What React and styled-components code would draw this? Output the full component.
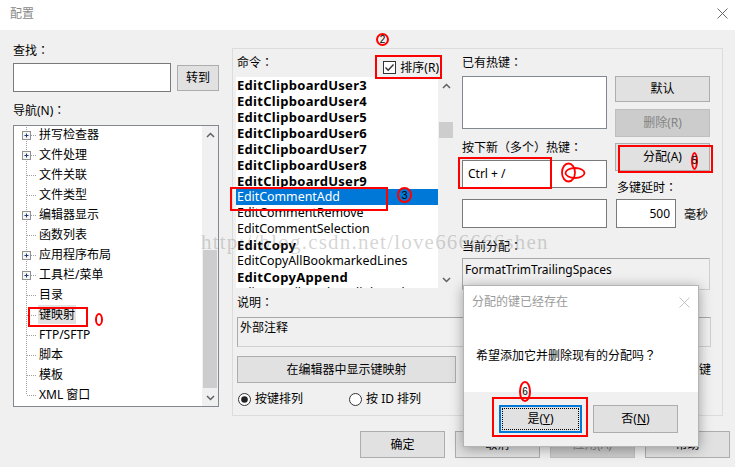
import React from 'react';
import styled, { createGlobalStyle } from 'styled-components';

const GlobalStyle = createGlobalStyle`
  html, body {
    margin: 0;
    padding: 0;
    background: #f0f0f0;
  }
  body {
    font-family: "Noto Sans", "Noto Sans CJK SC", sans-serif;
    font-size: 12px;
    color: #000;
  }
`;

const Window = styled.div`
  position: relative;
  width: 735px;
  height: 467px;
  overflow: hidden;
  background: #f0f0f0;
`;

const TitleBar = styled.div`
  height: 30px;
  box-sizing: border-box;
  background: #fff;
  display: flex;
  align-items: center;
  justify-content: space-between;
  padding: 0 7px 3px 10px;
  color: #8a8a8a;
  line-height: 16px;
`;

const Content = styled.div`
  display: flex;
  padding-left: 13px;
`;

const LeftPane = styled.div`
  width: 206px;
  display: flex;
  flex-direction: column;
`;

// full-width punctuation sits centred in its cell, as in the Windows UI font
const Punct = styled.span`
  font-family: "Noto Sans CJK JP", sans-serif;
`;

const zh = text =>
  text.split(/([：（）？])/).map((part, i) =>
    /^[：（）？]$/.test(part) ? <Punct key={i}>{part}</Punct> : part
  );

const Label = styled.div`
  line-height: 16px;
  height: 16px;
  white-space: nowrap;
  margin-top: ${p => p.$mt || 0}px;
  margin-left: ${p => p.$ml || 0}px;
`;

const Row = styled.div`
  display: flex;
  align-items: ${p => p.$align || 'flex-start'};
  gap: ${p => p.$gap || 0}px;
  margin-top: ${p => p.$mt || 0}px;
  margin-left: ${p => p.$ml || 0}px;
`;

const Column = styled.div`
  display: flex;
  flex-direction: column;
  width: ${p => p.$w}px;
  flex: none;
`;

const TextInput = styled.div`
  box-sizing: border-box;
  flex: none;
  width: ${p => p.$w}px;
  height: ${p => p.$h || 29}px;
  margin-top: ${p => p.$mt || 0}px;
  margin-left: ${p => p.$ml || 0}px;
  background: #fff;
  border: 1px solid ${p => p.$soft ? '#828790' : '#7a7a7a'};
  display: flex;
  align-items: center;
  justify-content: ${p => p.$right ? 'flex-end' : 'flex-start'};
  padding: 0 5px;
  line-height: 16px;
  white-space: nowrap;
`;

const ReadOnlyBox = styled.div`
  box-sizing: border-box;
  width: ${p => p.$w}px;
  height: ${p => p.$h}px;
  margin-top: ${p => p.$mt || 0}px;
  margin-left: ${p => p.$ml || 0}px;
  background: #f0f0f0;
  border: 1px solid #cfcfcf;
  border-top-color: #a9a9a9;
  border-left-color: #a9a9a9;
  padding: ${p => p.$pt || 2}px 2px 0 2px;
  line-height: 16px;
  white-space: nowrap;
`;

const Button = styled.button`
  box-sizing: border-box;
  flex: none;
  width: ${p => p.$w}px;
  height: ${p => p.$h || 27}px;
  margin: ${p => p.$mt || 0}px 0 0 ${p => p.$ml || 0}px;
  padding: 0;
  font: inherit;
  line-height: 16px;
  display: flex;
  align-items: center;
  justify-content: center;
  background: ${p => p.$disabled ? '#cccccc' : '#e1e1e1'};
  border: 1px solid ${p => p.$disabled ? '#bfbfbf' : '#adadad'};
  color: ${p => p.$disabled ? '#838383' : '#000'};
  white-space: nowrap;
`;

const Tree = styled.div`
  box-sizing: border-box;
  margin-top: 7px;
  height: 282px;
  border: 1px solid #828790;
  background: #fff;
  display: flex;
  overflow: hidden;
`;

const TreeList = styled.div`
  flex: 1;
  margin-top: -1px;
`;

const TreeRow = styled.div`
  display: flex;
  align-items: flex-start;
  height: 20px;
  padding-left: 8px;
`;

const TreeText = styled.span`
  line-height: 20px;
  height: 19px;
  margin-left: 1px;
  padding: 0 1px;
  background: ${p => p.$selected ? '#e3e3e3' : 'transparent'};
  white-space: nowrap;
`;

const ScrollBar = styled.div`
  width: ${p => p.$w || 16}px;
  flex: none;
  background: #f0f0f0;
  display: flex;
  flex-direction: column;
`;

const ScrollArrow = styled.div`
  height: 17px;
  display: flex;
  align-items: center;
  justify-content: center;
  margin-top: ${p => p.$bottom ? 'auto' : '0'};
`;

const Thumb = styled.div`
  margin: ${p => p.$top}px 1px 0 1px;
  height: ${p => p.$h}px;
  background: #cdcdcd;
`;

const Group = styled.div`
  box-sizing: border-box;
  width: 491px;
  height: 368px;
  margin-top: 18px;
  border: 1px solid #dcdcdc;
  padding: 0 11px 0 3px;
`;

const RightArea = styled.div`
  margin-left: 13px;
  display: flex;
  flex-direction: column;
`;

const ListHeader = styled.div`
  display: flex;
  justify-content: space-between;
  height: 28px;
  padding-right: 16px;
`;

const CheckLabel = styled.div`
  display: flex;
  align-items: center;
  gap: 4px;
  line-height: 16px;
  margin-top: ${p => p.$mt || 0}px;
  margin-left: ${p => p.$ml === 'auto' ? 'auto' : `${p.$ml || 0}px`};
  white-space: nowrap;
`;

const CommandList = styled.div`
  height: 211px;
  width: 218px;
  display: flex;
  background: #fff;
  overflow: hidden;
`;

const CommandItems = styled.div`
  flex: 1;
  overflow: hidden;
`;

const CommandItem = styled.div`
  height: 16px;
  line-height: 16px;
  padding-left: 1px;
  white-space: nowrap;
  font-size: ${p => p.$bold ? '13px' : '12.4px'};
  font-weight: ${p => p.$bold ? 700 : 400};
  letter-spacing: ${p => p.$bold ? '0.3px' : '0'};
  background: ${p => p.$selected ? '#0078d7' : 'transparent'};
  color: ${p => p.$selected ? '#fff' : '#000'};
`;

const Footer = styled.div`
  display: flex;
  justify-content: flex-end;
  gap: 10px;
  margin-top: 15px;
  padding-right: 5px;
  width: 503px;
  box-sizing: border-box;
`;

const Watermark = styled.div`
  position: absolute;
  left: 201px;
  top: 232px;
  font-family: "Liberation Serif", serif;
  font-size: 21px;
  line-height: 21px;
  letter-spacing: 1.2px;
  color: rgba(110, 110, 110, 0.3);
  white-space: nowrap;
  pointer-events: none;
`;

const Dialog = styled.div`
  position: absolute;
  left: 463px;
  top: 285px;
  width: 236px;
  height: 162px;
  box-sizing: border-box;
  background: #fff;
  border: 1px solid #b4b4b4;
  box-shadow: 0 2px 12px rgba(0, 0, 0, 0.35);
  display: flex;
  flex-direction: column;
`;

const DialogHead = styled.div`
  height: 32px;
  display: flex;
  align-items: center;
  justify-content: space-between;
  padding: 0 8px 0 8px;
  color: #9a9a9a;
  line-height: 16px;
`;

const DialogBody = styled.div`
  flex: 1;
  padding: 29px 0 0 12px;
  line-height: 16px;
`;

const DialogFoot = styled.div`
  height: 54px;
  background: #f0f0f0;
  display: flex;
  gap: 11px;
  padding: 13px 0 0 35px;
  box-sizing: border-box;
`;

const FocusButton = styled(Button)`
  border: 2px solid #0078d7;
  position: relative;
  &::after {
    content: '';
    position: absolute;
    inset: 1px;
    border: 1px dotted #000;
  }
`;

const Mnemonic = styled.span`
  text-decoration: underline;
`;

const RedBox = styled.div`
  position: absolute;
  left: ${p => p.$x}px;
  top: ${p => p.$y}px;
  width: ${p => p.$w}px;
  height: ${p => p.$h}px;
  box-sizing: border-box;
  border: 2px solid #ff0000;
  pointer-events: none;
`;

const RedMark = styled.div`
  position: absolute;
  left: ${p => p.$x}px;
  top: ${p => p.$y}px;
  width: ${p => p.$w}px;
  height: ${p => p.$h}px;
  box-sizing: border-box;
  border: 2px solid #ff0000;
  border-radius: 50%;
  display: flex;
  align-items: center;
  justify-content: center;
  font-family: "Liberation Sans", sans-serif;
  font-size: ${p => p.$fs || 10}px;
  line-height: 1;
  color: #000;
  pointer-events: none;
`;

const Scribble = styled.svg`
  position: absolute;
  left: 560px;
  top: 161px;
  pointer-events: none;
`;

const Up = () => (
  <svg width="9" height="6" viewBox="0 0 9 6">
    <path d="M1 5 L4.5 1.5 L8 5" fill="none" stroke="#606060" strokeWidth="1.5" />
  </svg>
);

const Down = () => (
  <svg width="9" height="6" viewBox="0 0 9 6">
    <path d="M1 1 L4.5 4.5 L8 1" fill="none" stroke="#606060" strokeWidth="1.5" />
  </svg>
);

const CloseX = ({ color = '#6a6a6a', size = 11 }) => (
  <svg width={size} height={size} viewBox="0 0 11 11">
    <path d="M0.5 0.5 L10.5 10.5 M10.5 0.5 L0.5 10.5" stroke={color} strokeWidth="1" />
  </svg>
);

const Branch = ({ plus, last }) => (
  <svg width="15" height="20" viewBox="0 0 15 20">
    <line x1="4.5" y1="0" x2="4.5" y2={last ? 10 : 20} stroke="#a0a0a0" strokeDasharray="1 1" />
    <line x1="5" y1="10.5" x2="15" y2="10.5" stroke="#a0a0a0" strokeDasharray="1 1" />
    {plus && (
      <g>
        <rect x="0.5" y="6.5" width="8" height="8" fill="#f4f4f4" stroke="#919191" />
        <path d="M2.5 10.5 H6.5 M4.5 8.5 V12.5" stroke="#1f3d7a" strokeWidth="1" />
      </g>
    )}
  </svg>
);

const CheckBox = ({ checked }) => (
  <svg width="13" height="13" viewBox="0 0 13 13">
    <rect x="0.5" y="0.5" width="12" height="12" fill="#fff" stroke="#333" />
    {checked && <path d="M2.5 6.5 L5.2 9.2 L10.5 3.5" fill="none" stroke="#333" strokeWidth="1.4" />}
  </svg>
);

const Radio = ({ checked }) => (
  <svg width="13" height="13" viewBox="0 0 13 13">
    <circle cx="6.5" cy="6.5" r="6" fill="#fff" stroke="#333" />
    {checked && <circle cx="6.5" cy="6.5" r="3.3" fill="#222" />}
  </svg>
);

const navItems = [
  { label: '拼写检查器', plus: true },
  { label: '文件处理', plus: true },
  { label: '文件关联' },
  { label: '文件类型' },
  { label: '编辑器显示', plus: true },
  { label: '函数列表' },
  { label: '应用程序布局', plus: true },
  { label: '工具栏/菜单', plus: true },
  { label: '目录' },
  { label: '键映射', selected: true },
  { label: 'FTP/SFTP' },
  { label: '脚本' },
  { label: '模板' },
  { label: 'XML 窗口', last: true },
];

const commands = [
  { name: 'EditClipboardUser3', bold: true },
  { name: 'EditClipboardUser4', bold: true },
  { name: 'EditClipboardUser5', bold: true },
  { name: 'EditClipboardUser6', bold: true },
  { name: 'EditClipboardUser7', bold: true },
  { name: 'EditClipboardUser8', bold: true },
  { name: 'EditClipboardUser9', bold: true },
  { name: 'EditCommentAdd', selected: true },
  { name: 'EditCommentRemove' },
  { name: 'EditCommentSelection' },
  { name: 'EditCopy', bold: true },
  { name: 'EditCopyAllBookmarkedLines' },
  { name: 'EditCopyAppend', bold: true },
  { name: 'EditCopyFilePathToClipboard' },
];

export default function App() {
  return (
    <Window>
      <GlobalStyle />
      <TitleBar>
        <span>配置</span>
        <CloseX />
      </TitleBar>

      <Content>
        <LeftPane>
          <Label $mt={12}>{zh('查找：')}</Label>
          <Row $mt={5} $align="center" $gap={6}>
            <TextInput $w={158} />
            <Button $w={42} $h={26}>转到</Button>
          </Row>
          <Label $mt={10}>{zh('导航(N)：')}</Label>
          <Tree>
            <TreeList>
              {navItems.map(item => (
                <TreeRow key={item.label}>
                  <Branch plus={item.plus} last={item.last} />
                  <TreeText $selected={item.selected}>{item.label}</TreeText>
                </TreeRow>
              ))}
            </TreeList>
            <ScrollBar>
              <ScrollArrow><Up /></ScrollArrow>
              <Thumb $top={107} $h={138} />
              <ScrollArrow $bottom><Down /></ScrollArrow>
            </ScrollBar>
          </Tree>
        </LeftPane>

        <RightArea>
          <Group>
            <Row $gap={7}>
              <Column $w={219}>
                <ListHeader>
                  <Label $mt={5} $ml={1}>{zh('命令：')}</Label>
                  <CheckLabel $mt={9}>
                    <CheckBox checked />
                    <span>排序(R)</span>
                  </CheckLabel>
                </ListHeader>
                <CommandList>
                  <CommandItems>
                    {commands.map(c => (
                      <CommandItem key={c.name} $bold={c.bold} $selected={c.selected}>
                        {c.name}
                      </CommandItem>
                    ))}
                  </CommandItems>
                  <ScrollBar>
                    <ScrollArrow><Up /></ScrollArrow>
                    <Thumb $top={28} $h={16} />
                    <ScrollArrow $bottom><Down /></ScrollArrow>
                  </ScrollBar>
                </CommandList>
              </Column>

              <Column $w={249}>
                <Row $gap={8}>
                  <Column $w={145}>
                    <Label $mt={5}>{zh('已有热键：')}</Label>
                    <TextInput $w={145} $h={53} $mt={6} $soft />
                    <Label $mt={10}>{zh('按下新（多个）热键：')}</Label>
                    <TextInput $w={145} $h={28} $mt={5}>Ctrl + /</TextInput>
                    <TextInput $w={145} $h={29} $mt={11} />
                  </Column>
                  <Column $w={95}>
                    <Button $w={95} $h={26} $mt={27}>默认</Button>
                    <Button $w={95} $h={28} $mt={7} $disabled>删除(R)</Button>
                    <Button $w={95} $h={28} $mt={6}>分配(A)</Button>
                    <Label $mt={8} $ml={2}>{zh('多键延时：')}</Label>
                    <Row $mt={4} $align="center">
                      <TextInput $w={60} $h={29} $ml={1} $right>500</TextInput>
                      <Label $ml={8} $mt={2}>毫秒</Label>
                    </Row>
                  </Column>
                </Row>
                <Label $mt={10}>{zh('当前分配：')}</Label>
                <ReadOnlyBox $w={248} $h={32} $mt={4} $pt={3}>FormatTrimTrailingSpaces</ReadOnlyBox>
              </Column>
            </Row>

            <Label $mt={4} $ml={1}>{zh('说明：')}</Label>
            <ReadOnlyBox $w={474} $h={30} $mt={7} $ml={1}>外部注释</ReadOnlyBox>
            <Row $mt={9} $align="center">
              <Button $w={219} $h={27} $ml={1}>在编辑器中显示键映射</Button>
              <CheckLabel $ml="auto">
                <CheckBox />
                <span>显示多键快捷键</span>
              </CheckLabel>
            </Row>
            <Row $mt={8} $ml={2} $align="center">
              <CheckLabel>
                <Radio checked />
                <span>按键排列</span>
              </CheckLabel>
              <CheckLabel $ml={46}>
                <Radio />
                <span>按 ID 排列</span>
              </CheckLabel>
            </Row>
          </Group>

          <Footer>
            <Button $w={85}>确定</Button>
            <Button $w={85}>取消</Button>
            <Button $w={85} $disabled>应用(A)</Button>
            <Button $w={85}>帮助</Button>
          </Footer>
        </RightArea>
      </Content>

      <Watermark>http://blog.csdn.net/love666666shen</Watermark>

      <Dialog>
        <DialogHead>
          <span>分配的键已经存在</span>
          <CloseX color="#c4c4c4" size={11} />
        </DialogHead>
        <DialogBody>{zh('希望添加它并删除现有的分配吗？')}</DialogBody>
        <DialogFoot>
          <FocusButton $w={83} $h={28}>是(<Mnemonic>Y</Mnemonic>)</FocusButton>
          <Button $w={85} $h={28}>否(<Mnemonic>N</Mnemonic>)</Button>
        </DialogFoot>
      </Dialog>

      <RedBox $x={28} $y={307} $w={60} $h={20} />
      <RedMark $x={95} $y={313} $w={8} $h={13} />
      <RedMark $x={376} $y={33} $w={13} $h={13} $fs={10}>2</RedMark>
      <RedBox $x={375} $y={55} $w={67} $h={24} />
      <RedBox $x={230} $y={187} $w={158} $h={24} />
      <RedMark $x={397} $y={187} $w={15} $h={16} $fs={11}>3</RedMark>
      <RedBox $x={458} $y={157} $w={94} $h={32} />
      <Scribble width="28" height="24" viewBox="0 0 28 24">
        <ellipse cx="8.5" cy="11.5" rx="6.5" ry="9" fill="none" stroke="#ff0000" strokeWidth="1.8" />
        <ellipse cx="15" cy="12" rx="9.5" ry="5" fill="none" stroke="#ff0000" strokeWidth="1.8" />
      </Scribble>
      <RedBox $x={618} $y={145} $w={95} $h={28} />
      <RedMark $x={691} $y={152} $w={7} $h={18} $fs={10}>5</RedMark>
      <RedBox $x={492} $y={397} $w={96} $h={40} />
      <RedMark $x={519} $y={381} $w={12} $h={21} $fs={10}>6</RedMark>
    </Window>
  );
}
